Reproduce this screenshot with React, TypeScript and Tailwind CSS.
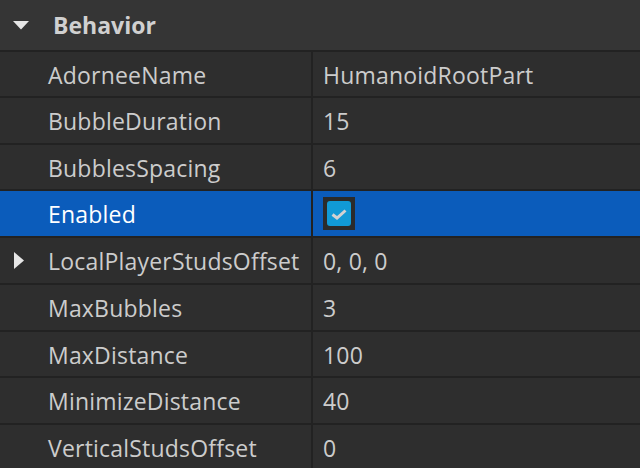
import React from "react";

type Prop = {
  name: string;
  value: string;
  h: string;
  expandable?: boolean;
  checkbox?: boolean;
  selected?: boolean;
};

const props: Prop[] = [
  { name: "AdorneeName", value: "HumanoidRootPart", h: "h-[46px]" },
  { name: "BubbleDuration", value: "15", h: "h-[47px]" },
  { name: "BubblesSpacing", value: "6", h: "h-[46px]" },
  { name: "Enabled", value: "", h: "h-[47px]", checkbox: true, selected: true },
  { name: "LocalPlayerStudsOffset", value: "0, 0, 0", h: "h-[47px]", expandable: true },
  { name: "MaxBubbles", value: "3", h: "h-[47px]" },
  { name: "MaxDistance", value: "100", h: "h-[46px]" },
  { name: "MinimizeDistance", value: "40", h: "h-[47px]" },
  { name: "VerticalStudsOffset", value: "0", h: "h-[47px]" },
];

const Check = () => (
  <div className="w-[32px] h-[33px] bg-[#2b2b2b] flex items-center justify-center">
    <div className="w-[24px] h-[25px] rounded-[3px] bg-[#119ad6] flex items-center justify-center">
      <svg width="18" height="14" viewBox="0 0 18 14">
        <path d="M2.5 7.5 L7 11 L15.5 3.5" fill="none" stroke="#d2d2d2" strokeWidth="3" />
      </svg>
    </div>
  </div>
);

export default function App() {
  return (
    <div
      className="w-[640px] h-[468px] overflow-hidden bg-[#2e2e2e] text-[#cccccc] text-[23px] tracking-[0.2px]"
      style={{ fontFamily: "'Open Sans', Lato, sans-serif" }}
    >
      {/* category header */}
      <div className="h-[50px] bg-[#353535] flex items-center">
        <div className="w-[53px] pl-[13px]">
          <svg width="16" height="9" viewBox="0 0 16 9">
            <path d="M0 0 H16 L8 8.5 Z" fill="#e6e6e6" />
          </svg>
        </div>
        <span className="font-bold text-[23px] tracking-normal text-[#d0d0d0]">Behavior</span>
      </div>

      {props.map((p) => (
        <div
          key={p.name}
          className={`flex border-t-2 border-[#222222] ${p.h} ${p.selected ? "bg-[#0b5cbb]" : ""}`}
        >
          <div className="w-[311px] flex items-center">
            <div className="w-[48px] pl-[14px]">
              {p.expandable && (
                <svg width="10" height="17" viewBox="0 0 10 17">
                  <path d="M0 0 L10 8.5 L0 17 Z" fill="#e6e6e6" />
                </svg>
              )}
            </div>
            <span className={`pt-[2px] ${p.selected ? "text-white" : ""}`}>{p.name}</span>
          </div>
          <div className="w-[2px] bg-[#222222]" />
          <div className="flex-1 flex items-center pl-[10px]">
            {p.checkbox ? <Check /> : <span className="pt-[2px]">{p.value}</span>}
          </div>
        </div>
      ))}
    </div>
  );
}
